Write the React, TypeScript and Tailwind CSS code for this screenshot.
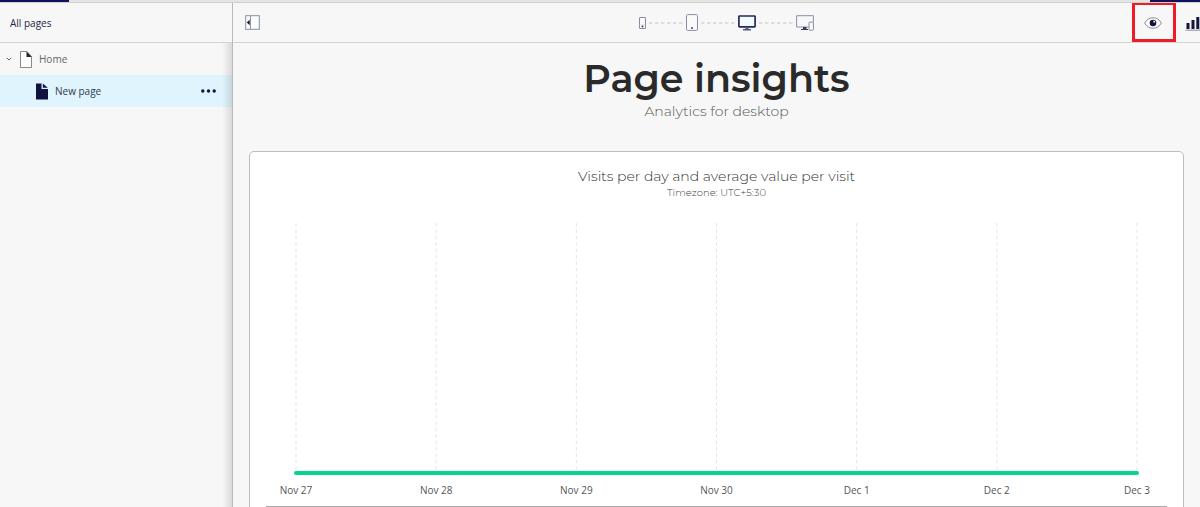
import React from "react";

const days = ["Nov 27", "Nov 28", "Nov 29", "Nov 30", "Dec 1", "Dec 2", "Dec 3"];

function PageIcon({ filled }: { filled?: boolean }) {
  return (
    <svg width="12" height="17" viewBox="0 0 12 17" aria-hidden="true">
      {filled ? (
        <>
          <path d="M0 0.5H5.5V6H12V16.5H0Z" fill="#10123f" />
          <path d="M6.8 0.5L11.8 4.8H6.8Z" fill="#10123f" />
        </>
      ) : (
        <>
          <path d="M0.5 0.5H7L11.5 5.5V16.5H0.5Z" fill="#fff" stroke="#8f8683" />
          <path d="M6.5 0.5L11.8 6H6.5Z" fill="#222230" />
        </>
      )}
    </svg>
  );
}

function Dashes({ width }: { width: number }) {
  return (
    <svg width={width} height="2" aria-hidden="true">
      <path d={`M0 1H${width}`} stroke="#d6d6d6" strokeWidth="1.3" strokeDasharray="3.5 2.5" />
    </svg>
  );
}

function Sidebar() {
  return (
    <aside className="relative flex w-[233px] shrink-0 flex-col border-r border-[#b9b9b9]">
      <h2 className="flex h-10 shrink-0 items-center border-b border-[#d3d3d3] px-[10px] pt-[2px] text-[10px] font-medium text-[#23263f]">
        All pages
      </h2>
      <nav className="relative flex-1">
        <a href="#home" className="flex h-8 items-center pl-[6px] text-[10px] text-[#666]">
          <svg width="6" height="6" viewBox="0 0 6 6" className="mr-2" aria-hidden="true">
            <path d="M0.8 1.8L3 4L5.2 1.8" fill="none" stroke="#666" />
          </svg>
          <PageIcon />
          <span className="ml-[7px]">Home</span>
        </a>
        <div className="flex h-8 items-center bg-[#dff4fd] pr-4 pl-9 text-[10px] font-medium text-[#33384d]">
          <a href="#new-page" className="flex flex-1 items-center">
            <PageIcon filled />
            <span className="ml-[7px]">New page</span>
          </a>
          <button type="button" aria-label="Page options">
            <svg width="15" height="4" viewBox="0 0 15 4" fill="#10123f" aria-hidden="true">
              <circle cx="1.8" cy="2" r="1.7" />
              <circle cx="7.5" cy="2" r="1.7" />
              <circle cx="13.2" cy="2" r="1.7" />
            </svg>
          </button>
        </div>
        <div className="pointer-events-none absolute inset-y-0 right-0 w-[10px] bg-linear-to-r from-transparent to-black/12" />
      </nav>
    </aside>
  );
}

function Toolbar() {
  return (
    <header className="flex h-10 shrink-0 items-center border-b border-[#d3d3d3]">
      <div className="flex flex-1 pl-3">
        <button type="button" aria-label="Collapse panel">
          <svg width="15" height="15" viewBox="0 0 15 15" fill="none" aria-hidden="true">
            <rect x="0.7" y="0.7" width="13.6" height="13.6" fill="#fdfdfd" stroke="#8491a3" />
            <path d="M5.5 0.5V14.5" stroke="#9b8fab" />
            <path d="M4.7 4.8V10.2L1.8 7.5Z" fill="#10123f" />
          </svg>
        </button>
      </div>
      <div className="flex items-center gap-[3px] pl-2">
        <button type="button" aria-label="Phone">
          <svg width="7" height="12" viewBox="0 0 7 12" aria-hidden="true">
            <rect x="0.5" y="0.5" width="6" height="11" rx="0.5" fill="#fafafa" stroke="#8b87a0" />
            <path d="M0.5 8H6.5" stroke="#c9c7d2" strokeWidth="0.6" />
            <circle cx="3.5" cy="9.5" r="0.9" fill="#33345c" />
          </svg>
        </button>
        <Dashes width={34} />
        <button type="button" aria-label="Tablet">
          <svg width="12" height="17" viewBox="0 0 12 17" aria-hidden="true">
            <rect x="0.5" y="0.6" width="11" height="15.8" rx="1" fill="#fafafa" stroke="#8d8ba6" />
            <circle cx="6" cy="14" r="0.9" fill="#33345c" />
          </svg>
        </button>
        <Dashes width={34} />
        <button type="button" aria-label="Desktop">
          <svg width="18" height="16" viewBox="0 0 18 16" aria-hidden="true">
            <rect x="0.9" y="1" width="16.2" height="10.8" rx="0.6" fill="#f4fbff" stroke="#242a59" strokeWidth="1.7" />
            <path d="M7.4 12H10.6V14H13V15.4H5V14H7.4Z" fill="#555c80" />
          </svg>
        </button>
        <Dashes width={34} />
        <button type="button" aria-label="All devices">
          <svg width="18" height="16" viewBox="0 0 18 16" fill="none" aria-hidden="true">
            <path d="M12.5 12H0.6V0.7H17.4V7" stroke="#8990a3" />
            <rect x="13" y="7.2" width="4.4" height="8" rx="0.6" fill="#fafafa" stroke="#8f8aa5" />
            <path d="M7 12H10.5V14H12V15H5V14H7Z" fill="#343a63" />
          </svg>
        </button>
      </div>
      <div className="flex flex-1 items-center justify-end">
        <div className="relative flex w-11 justify-center pr-[2px]">
          <div className="pointer-events-none absolute inset-x-0 -top-[15px] h-10 border-[3px] border-[#ee1c24]" />
          <button type="button" aria-label="Preview">
            <svg width="18" height="12" viewBox="0 0 18 12" aria-hidden="true">
              <path d="M0.7 6C4.2-1 13.8-1 17.3 6C13.8 13 4.2 13 0.7 6Z" fill="#fcfcfc" stroke="#8a8a96" />
              <circle cx="9" cy="6" r="3.3" fill="#10123f" />
              <path d="M9.4 5.6V3.6A2.2 2.2 0 0 1 11.4 5.6Z" fill="#f4f4f8" />
            </svg>
          </button>
        </div>
        <button type="button" aria-label="Insights" className="-mr-1 ml-[9px] shrink-0">
          <svg width="19" height="16" viewBox="0 0 19 16" fill="#14163f" aria-hidden="true">
            <path d="M1.5 8H4.5V14H1.5ZM6.5 5H9.5V14H6.5ZM11.3 2H14.3V14H11.3ZM16 0H19V14H16Z" />
            <path d="M0.5 15.2H19" stroke="#858b98" />
          </svg>
        </button>
      </div>
    </header>
  );
}

function VisitsChart() {
  return (
    <svg
      className="block h-[280px] w-full overflow-visible"
      role="img"
      aria-label="Visits per day and average value per visit"
    >
      {days.map((day, i) => {
        const x = `${(i * 100) / (days.length - 1)}%`;
        return (
          <g key={day}>
            <line x1={x} x2={x} y1="0" y2="248" stroke="#e6e6e6" strokeDasharray="3.5 2.9" />
            <text x={x} y="271" textAnchor="middle" fontSize="10" fill="#555">
              {day}
            </text>
          </g>
        );
      })}
      <line x1="0" x2="100%" y1="250" y2="250" stroke="#04d690" strokeWidth="4" strokeLinecap="round" />
    </svg>
  );
}

export default function App() {
  return (
    <div className="flex h-screen flex-col overflow-hidden bg-[#f7f7f7] font-['Open_Sans',sans-serif]">
      <div className="flex h-[3px] shrink-0 justify-between border-b border-[#cfcfcf] bg-[#e4e4e4]">
        <div className="w-[69px] bg-[#12125a]" />
        <div className="w-[50px] bg-[#12125a]" />
      </div>
      <div className="flex min-h-0 flex-1">
        <Sidebar />
        <main className="flex min-w-0 flex-1 flex-col overflow-hidden">
          <Toolbar />
          <div className="flex min-h-0 flex-1 flex-col overflow-hidden px-4 pt-3 font-['Montserrat','Inter',sans-serif]">
            <div className="shrink-0 text-center">
              <h1 className="text-[38px] leading-[48px] font-semibold text-[#2a2a2a]">Page insights</h1>
              <p className="text-[14px] leading-4 font-light text-[#555]">Analytics for desktop</p>
            </div>
            <section className="mt-8 shrink-0 rounded-[5px] border border-[#bdbdbd] bg-white px-4 pt-4 pb-8 text-center">
              <h2 className="text-[14px] leading-4 font-light text-[#333]">
                Visits per day and average value per visit
              </h2>
              <p className="mt-[3px] text-[10px] leading-3 font-light text-[#444]">Timezone: UTC+5:30</p>
              <div className="border-b border-[#aaa] px-[30px] pt-6 pb-[3px] font-['Open_Sans',sans-serif]">
                <VisitsChart />
              </div>
            </section>
          </div>
        </main>
      </div>
    </div>
  );
}
